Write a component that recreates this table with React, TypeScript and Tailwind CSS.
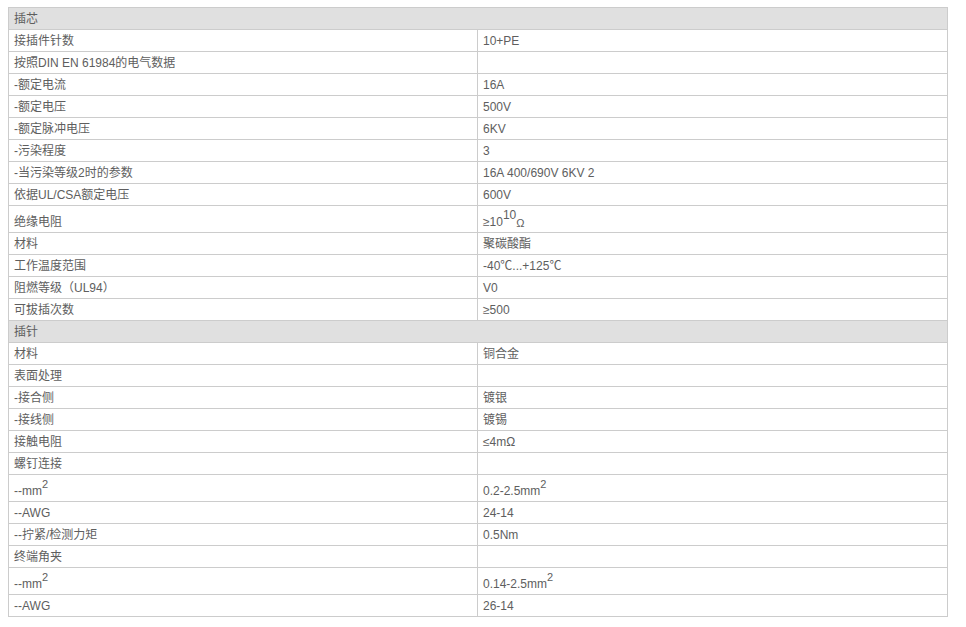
import React from "react";

type Row =
  | { kind: "head"; label: string }
  | { kind: "row"; label: React.ReactNode; value?: React.ReactNode; tall?: boolean };

const Sup2 = () => (
  <span className="relative -top-[7px] text-[11px]">2</span>
);

const rows: Row[] = [
  { kind: "head", label: "插芯" },
  { kind: "row", label: "接插件针数", value: "10+PE" },
  { kind: "row", label: "按照DIN EN 61984的电气数据", value: "" },
  { kind: "row", label: "-额定电流", value: "16A" },
  { kind: "row", label: "-额定电压", value: "500V" },
  { kind: "row", label: "-额定脉冲电压", value: "6KV" },
  { kind: "row", label: "-污染程度", value: "3" },
  { kind: "row", label: "-当污染等级2时的参数", value: "16A 400/690V 6KV 2" },
  { kind: "row", label: "依据UL/CSA额定电压", value: "600V" },
  {
    kind: "row",
    label: "绝缘电阻",
    tall: true,
    value: (
      <>
        ≥10<span className="relative -top-[7px] text-[12px]">10</span>
        <span className="relative top-[1px] text-[11px]">Ω</span>
      </>
    ),
  },
  { kind: "row", label: "材料", value: "聚碳酸酯" },
  { kind: "row", label: "工作温度范围", value: "-40℃...+125℃" },
  { kind: "row", label: "阻燃等级（UL94）", value: "V0" },
  { kind: "row", label: "可拔插次数", value: "≥500" },
  { kind: "head", label: "插针" },
  { kind: "row", label: "材料", value: "铜合金" },
  { kind: "row", label: "表面处理", value: "" },
  { kind: "row", label: "-接合侧", value: "镀银" },
  { kind: "row", label: "-接线侧", value: "镀锡" },
  { kind: "row", label: "接触电阻", value: "≤4mΩ" },
  { kind: "row", label: "螺钉连接", value: "" },
  {
    kind: "row",
    tall: true,
    label: (
      <>
        --mm<Sup2 />
      </>
    ),
    value: (
      <>
        0.2-2.5mm<Sup2 />
      </>
    ),
  },
  { kind: "row", label: "--AWG", value: "24-14" },
  { kind: "row", label: "--拧紧/检测力矩", value: "0.5Nm" },
  { kind: "row", label: "终端角夹", value: "" },
  {
    kind: "row",
    tall: true,
    label: (
      <>
        --mm<Sup2 />
      </>
    ),
    value: (
      <>
        0.14-2.5mm<Sup2 />
      </>
    ),
  },
  { kind: "row", label: "--AWG", value: "26-14" },
];

export default function App() {
  return (
    <div
      className="min-h-[627px] w-[966px] bg-white pt-[7px] pl-[8px] text-[12px] text-[#5e5e5e]"
      style={{ fontFamily: '"Liberation Sans", Arial, "Noto Sans CJK SC", sans-serif' }}
    >
      <div className="w-[940px] border border-[#cccccc]">
        {rows.map((r, i) => {
          const last = i === rows.length - 1;
          const bb = last ? "" : "border-b border-[#cccccc]";
          if (r.kind === "head") {
            return (
              <div
                key={i}
                className={`flex h-[22px] items-center bg-[#e0e0e0] pl-[5px] pt-[1px] leading-[20px] ${bb}`}
              >
                {r.label}
              </div>
            );
          }
          const h = r.tall ? "h-[26px] items-end" : "h-[21px] items-center pt-[1px]";
          return (
            <div key={i} className={`grid grid-cols-[468px_1fr] leading-[20px] ${bb}`}>
              <div className={`flex ${h} whitespace-nowrap pl-[5px]`}>
                <span>{r.label}</span>
              </div>
              <div className={`flex ${h} whitespace-nowrap border-l border-[#cccccc] pl-[5px]`}>
                <span>{r.value}</span>
              </div>
            </div>
          );
        })}
      </div>
    </div>
  );
}
